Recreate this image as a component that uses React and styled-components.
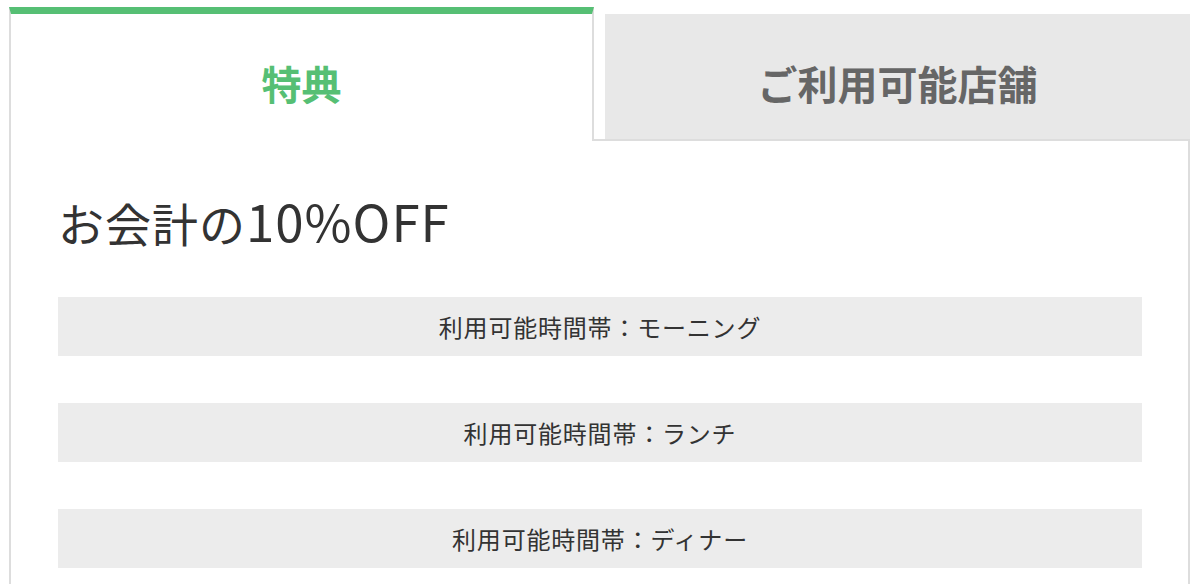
import React from "react";
import styled, { createGlobalStyle } from "styled-components";

const GlobalStyle = createGlobalStyle`
  html, body {
    margin: 0;
    padding: 0;
    background: #fff;
  }
  body {
    font-family: "Noto Sans CJK JP", "Noto Sans", sans-serif;
    color: #333;
  }
`;

const Page = styled.div`
  padding: 7px 10px 0 9px;
`;

const TabRow = styled.div`
  display: flex;
  align-items: stretch;
  height: 134px;
`;

const ActiveTab = styled.div`
  box-sizing: border-box;
  width: 585px;
  height: 134px;
  border-top: 7px solid #56bf74;
  border-left: 2px solid #ddd;
  border-right: 2px solid #ddd;
  display: flex;
  align-items: center;
  justify-content: center;
  padding-top: 10px;
  font-size: 40px;
  font-weight: 700;
  color: #56bf74;
`;

const TabSlot = styled.div`
  box-sizing: border-box;
  flex: 1;
  height: 134px;
  padding: 7px 0 0 11px;
  border-bottom: 2px solid #ddd;
  display: flex;
`;

const InactiveTab = styled.div`
  flex: 1;
  background: #e8e8e8;
  display: flex;
  align-items: center;
  justify-content: center;
  padding-top: 12px;
  font-size: 40px;
  font-weight: 700;
  color: #666;
`;

const Panel = styled.div`
  border-left: 2px solid #ddd;
  border-right: 2px solid #ddd;
  padding: 45px 46px 40px 47px;
  min-height: 400px;
`;

const Heading = styled.h2`
  margin: 0 0 40px;
  font-size: 46px;
  font-weight: 400;
  line-height: 69px;
  letter-spacing: 1px;
  color: #333;
`;

const Latin = styled.span`
  font-size: 51px;
`;

const SlotList = styled.div`
  display: flex;
  flex-direction: column;
  gap: 47px;
`;

const SlotRow = styled.div`
  height: 59px;
  background: #ececec;
  display: flex;
  align-items: center;
  justify-content: center;
  font-size: 24px;
  letter-spacing: 0.8px;
  color: #333;
`;

const slots = ["モーニング", "ランチ", "ディナー"];

export default function App() {
  return (
    <Page>
      <GlobalStyle />
      <TabRow>
        <ActiveTab>特典</ActiveTab>
        <TabSlot>
          <InactiveTab>ご利用可能店舗</InactiveTab>
        </TabSlot>
      </TabRow>
      <Panel>
        <Heading>
          お会計の<Latin>10%OFF</Latin>
        </Heading>
        <SlotList>
          {slots.map((s) => (
            <SlotRow key={s}>利用可能時間帯：{s}</SlotRow>
          ))}
        </SlotList>
      </Panel>
    </Page>
  );
}
